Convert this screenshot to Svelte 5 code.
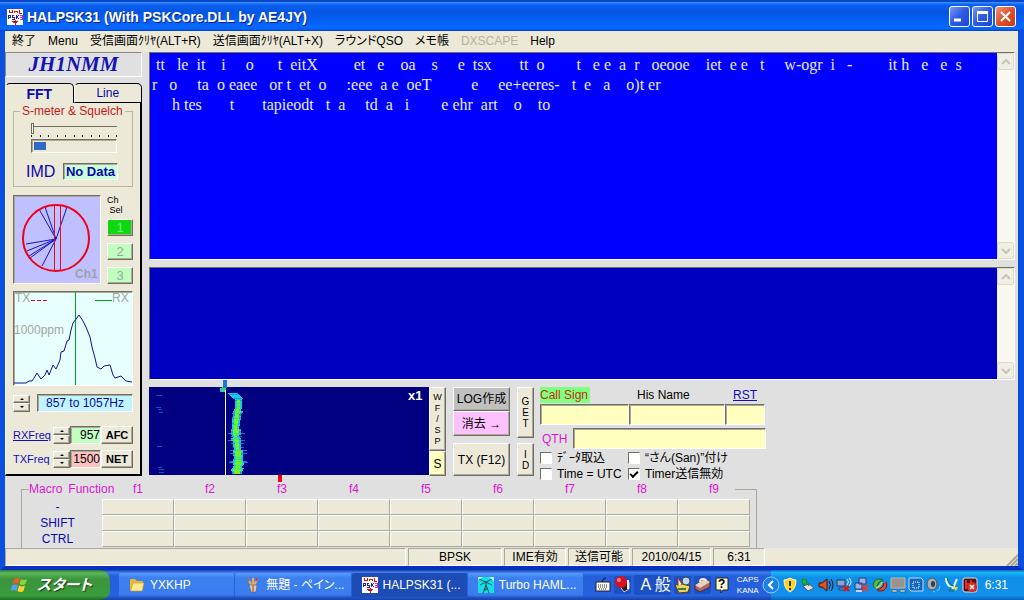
<script lang="ts">
    const menu = [
        { label: "終了" },
        { label: "Menu" },
        { label: "受信画面ｸﾘﾔ(ALT+R)" },
        { label: "送信画面ｸﾘﾔ(ALT+X)" },
        { label: "ラウンドQSO" },
        { label: "メモ帳" },
        { label: "DXSCAPE", disabled: true },
        { label: "Help" },
    ];

    const received = [
        " tt   le  it    i     o      t  eitX         et   e    oa    s     e  tsx       tt  o        t   e e  a  r   oeooe    iet  e e   t     w-ogr  i   -         it h   e   e  s",
        "r   o     ta  o eaee   or t  et  o     :eee  a e  oeT          e     ee+eeres-   t  e   a    o)t er",
        "     h tes       t       tapieodt   t  a     td  a   i        e ehr  art    o    to",
    ].join("\n");

    const functionKeys = ["f1", "f2", "f3", "f4", "f5", "f6", "f7", "f8", "f9"];
    const macroRows = ["-", "SHIFT", "CTRL"];
    const channels = [1, 2, 3];

    const tasks = [
        { icon: "folder", label: "YXKHP" },
        { icon: "paint", label: "無題 - ペイン..." },
        { icon: "psk", label: "HALPSK31 (...", active: true },
        { icon: "turbo", label: "Turbo HAML..." },
    ];

    const trayIcons = ["shield", "eject", "volume", "wireless", "network", "swirl", "monitor", "chip", "speaker", "antenna", "blocked"];

    const level = 15;

    let channel = $state(1);
    let squelch = $state(0);
    let importData = $state(false);
    let addSan = $state(false);
    let useUtc = $state(false);
    let timerOff = $state(true);

    // Waterfall trace: one strip per line, wandering around the carrier
    let seed = 31;
    function rand() {
        seed = (seed * 1103515245 + 12345) % 2147483648;
        return seed / 2147483648;
    }

    type Strip = { x: number; y: number; w: number; fill: string };
    const strips: Strip[] = [];
    let width = 4;
    for (let y = 6; y < 87; y++) {
        const mid = y < 11 ? 84 + (y - 6) : 88 + Math.sin(y / 9) * 1.5;
        if (y % 3 === 0) {
            width = 3 + Math.floor(rand() * 4) + (y > 66 ? 2 : 0);
        }
        if (rand() > 0.85) {
            strips.push({ x: Math.round(mid - width - 2), y, w: width * 2 + 5, fill: "#1976d8" });
        }
        strips.push({ x: Math.round(mid - width / 2 - 2), y, w: width + 4, fill: rand() > 0.7 ? "#1898e8" : "#18d0e0" });
        if (y > 12) {
            strips.push({ x: Math.round(mid - width / 2), y, w: width, fill: rand() > 0.3 ? "#78f020" : "#30e880" });
        }
    }
    for (const y of [8, 20, 22, 25, 59, 80, 82, 85]) {
        strips.push({ x: 7 + Math.floor(rand() * 4), y, w: 4 + Math.floor(rand() * 3), fill: "#1058b8" });
    }
</script>

{#snippet pskIcon()}
    <svg width="16" height="16" viewBox="0 0 16 16" shape-rendering="crispEdges" aria-hidden="true">
        <rect width="16" height="16" fill="#fff" />
        <path d="M2 1v3M5 1v3M2 3h3M7 4V2h3v2M12 1v3h3" stroke="#e01010" fill="none" />
        <path d="M1 10V6h2v2H1M7 6H5v2h2v2H5M9 6v4M12 6l-2 2 2 2" stroke="#2020c0" fill="none" />
        <path d="M13 6h2v4h-2M13 8h2" stroke="#e020d0" fill="none" />
        <path d="M8 11v5M5 12h6M6 13h4" stroke="#d01010" fill="none" />
    </svg>
{/snippet}

{#snippet spinner(name: string)}
    <span class="spinner">
        <button class="raised" aria-label="{name} up"><i class="up"></i></button>
        <button class="raised" aria-label="{name} down"><i class="down"></i></button>
    </span>
{/snippet}

{#snippet scrollbar(name: string)}
    <div class="scrollbar">
        <button aria-label="{name}: scroll up">
            <svg width="10" height="6" viewBox="0 0 10 6"><path d="M1 5l4-4 4 4" fill="none" stroke="#c6c5b8" stroke-width="2" /></svg>
        </button>
        <button aria-label="{name}: scroll down">
            <svg width="10" height="6" viewBox="0 0 10 6"><path d="M1 1l4 4 4-4" fill="none" stroke="#c6c5b8" stroke-width="2" /></svg>
        </button>
    </div>
{/snippet}

{#snippet taskIcon(icon: string)}
    {#if icon === "folder"}
        <svg width="16" height="16" viewBox="0 0 16 16" aria-hidden="true">
            <path d="M1 3q0-1 1-1h4l2 2h5q1 0 1 1v8H2q-1 0-1-1z" fill="#e8b83c" />
            <path d="M4 6h11l-2 8H1.500z" fill="#ffe98a" stroke="#c89a28" stroke-width=".6" />
        </svg>
    {:else if icon === "paint"}
        <svg width="16" height="16" viewBox="0 0 16 16" aria-hidden="true">
            <path d="M3 2l4 7M8 1v8M12 2l-3 7" stroke="#e8b060" stroke-width="2" />
            <path d="M2 1l2 3" stroke="#777" stroke-width="3" />
            <path d="M12 1l-1 3" stroke="#d84020" stroke-width="2" />
            <path d="M4 8h8l-1 7H6z" fill="#b9d3e0" stroke="#567" stroke-width=".7" />
            <path d="M8 8v7" stroke="#e87830" stroke-width="2" />
        </svg>
    {:else if icon === "psk"}
        {@render pskIcon()}
    {:else}
        <svg width="16" height="16" viewBox="0 0 16 16" aria-hidden="true">
            <rect width="16" height="16" fill="#18dce8" />
            <path d="M1 2l13 6M2 8l12-6M8 5v5M8 8l-3 8M8 8l3 8M6 12h4M5 15l5-4" stroke="#14585c" fill="none" />
            <path d="M0 0h5l-5 3zM11 0h5v4z" fill="#b8fcff" />
        </svg>
    {/if}
{/snippet}

{#snippet trayIcon(icon: string)}
    <svg width="16" height="16" viewBox="0 0 16 16" aria-hidden="true">
        {#if icon === "shield"}
            <path d="M8 1q3 2 6 2 0 9-6 12-6-3-6-12 3 0 6-2z" fill="#ffd51c" stroke="#fff6c0" />
            <path d="M8 4v5M8 11v2" stroke="#333" stroke-width="2" />
        {:else if icon === "eject"}
            <path d="M3 9l6-2 5 4-6 3z" fill="#dde3e8" stroke="#56606a" />
            <path d="M2 2l5 1-1 2q4 1 3 4-2-3-5-2L3 8z" fill="#22b82a" stroke="#0c7418" stroke-width=".6" />
        {:else if icon === "volume"}
            <path d="M1 6h3l5-4v12l-5-4H1z" fill="#e85020" stroke="#401008" />
            <path d="M11 4q3 4 0 8M13 2q4 6 0 12" stroke="#401008" fill="none" />
        {:else if icon === "wireless"}
            <path d="M1 3h8v6H1zM3 11h7v2H3z" fill="#8aa4d8" stroke="#24366c" />
            <path d="M11 2q3 3 0 6M13 1q4 4 0 8" stroke="#d8ecff" fill="none" />
            <path d="M8 9l5 5M13 9l-5 5" stroke="#e01818" stroke-width="2" />
        {:else if icon === "network"}
            <path d="M5 1h7v6H5zM1 6h7v6H1z" fill="#9cb4e8" stroke="#283878" />
            <path d="M2 14h6" stroke="#ccd6ea" stroke-width="2" />
            <path d="M8 8l6 6M14 8l-6 6" stroke="#e83838" stroke-width="2" />
        {:else if icon === "swirl"}
            <path d="M2 11a6 6 0 0 1 6-9q3 0 3 2-4-1-6 5" fill="#58b848" stroke="#186828" />
            <path d="M14 5a6 6 0 0 1-6 9q-3 0-3-2 5 1 7-6" fill="#e04838" stroke="#701818" />
            <path d="M4 11q4-1 6-6" stroke="#b8d840" stroke-width="2" fill="none" />
        {:else if icon === "monitor"}
            <path d="M1 1h14v10H1z" fill="#98948c" stroke="#bcb8b0" />
            <path d="M2 13h5v2H2zM10 13h5v2h-5z" fill="#e4e4e0" stroke="#444" stroke-width=".6" />
        {:else if icon === "chip"}
            <path d="M1 1h12l2 2v11H3l-2-2z" fill="#1c64b4" stroke="#b8dcff" />
            <path d="M5 5h6v6H5z" fill="none" stroke="#7cc0f8" stroke-dasharray="1 1" stroke-width="2" />
        {:else if icon === "speaker"}
            <ellipse cx="6" cy="7" rx="5" ry="6" fill="#a8aeb6" stroke="#4c545c" />
            <ellipse cx="7" cy="7" rx="2" ry="3" fill="#343c44" />
            <path d="M11 14q3-1 3-5M9 15q-1 0-2-1" stroke="#80c4ff" fill="none" />
        {:else if icon === "antenna"}
            <path d="M2 1q0 8 7 10l4-9" fill="none" stroke="#e8fff8" stroke-width="2" />
            <path d="M3 1q2 7 7 8M7 10l-2 4h5" fill="none" stroke="#186858" />
            <path d="M9 10h5l-2 4z" fill="#f0e020" />
        {:else}
            <rect x="1" y="1" width="14" height="14" rx="2" fill="#481818" stroke="#f0d8d8" />
            <path d="M4 3v9M4 7h5M9 3v5" stroke="#d83030" stroke-width="2" />
            <circle cx="10" cy="10" r="5" fill="#e02828" />
            <path d="M8 8l4 4M12 8l-4 4" stroke="#fff" stroke-width="1.500" />
        {/if}
    </svg>
{/snippet}

<div class="desktop">
    <main class="window">
        <header class="titlebar">
            {@render pskIcon()}
            <h1>HALPSK31 (With PSKCore.DLL by AE4JY)</h1>
            <button class="caption" aria-label="Minimize">
                <svg width="19" height="19" viewBox="0 0 19 19"><path d="M4 13h7" stroke="#fff" stroke-width="3" /></svg>
            </button>
            <button class="caption" aria-label="Maximize">
                <svg width="19" height="19" viewBox="0 0 19 19"><path d="M4 5.500h11" stroke="#fff" stroke-width="3" /><path d="M4.500 5v9.500h10V5" fill="none" stroke="#fff" /></svg>
            </button>
            <button class="caption close" aria-label="Close">
                <svg width="19" height="19" viewBox="0 0 19 19"><path d="M5 5l9 9M14 5l-9 9" stroke="#fff" stroke-width="2" /></svg>
            </button>
        </header>

        <nav class="menubar">
            {#each menu as item}
                <button disabled={item.disabled}>{item.label}</button>
            {/each}
        </nav>

        <div class="workspace">
            <aside class="side">
                <div class="callsign">JH1NMM</div>
                <div class="tabs">
                    <button class="tab selected">FFT</button>
                    <button class="tab">Line</button>
                </div>

                <div class="panel">
                    <fieldset class="smeter">
                        <legend>S-meter &amp; Squelch</legend>
                        <input type="range" min="0" max="100" bind:value={squelch} aria-label="Squelch" />
                        <div class="ticks">
                            {#each Array(11) as _}<i></i>{/each}
                        </div>
                        <div class="level sunken"><span style="width: {level}%"></span></div>
                        <div class="imd">
                            <span>IMD</span>
                            <output class="sunken">No Data</output>
                        </div>
                    </fieldset>

                    <div class="scope-row">
                        <div class="vector sunken">
                            <svg width="86" height="86" viewBox="0 0 86 86" role="img" aria-label="Phase vectors">
                                <path d="M42 43L25 13M42 43L31 11M42 43L53 11M42 43L12 48M42 43L13 55M42 43L15 60M42 43L16 62M42 43L28 70" stroke="#1414c8" fill="none" />
                                <path d="M40.500 9v65M46.500 9v65" stroke="#e01020" />
                                <circle cx="42" cy="42" r="33" fill="none" stroke="#f00018" stroke-width="2" />
                                <text x="61" y="82">Ch1</text>
                            </svg>
                        </div>
                        <div class="channels">
                            <p>Ch<br />&nbsp;Sel</p>
                            {#each channels as n}
                                <button class="raised" class:on={channel === n} onclick={() => (channel = n)}>{n}</button>
                            {/each}
                        </div>
                    </div>

                    <div class="spectrum sunken">
                        <svg width="118" height="93" viewBox="0 0 118 93" role="img" aria-label="Spectrum">
                            <g shape-rendering="crispEdges" fill="none">
                                <path d="M61.500 0v93" stroke="#00a020" />
                                <path d="M17 8.500h16" stroke="#e00028" stroke-dasharray="4 2" />
                                <path d="M81 8.500h17" stroke="#00a020" />
                            </g>
                            <polyline points="0,91 12,91 15,89 18,89 20,86 23,81 27,87 31,83 33,78 35,83 39,73 42,77 46,68 47,60 50,59 53,49 55,48 57,38 59,31 62,27 65,23 69,29 72,35 76,45 78,55 81,66 83,75 87,77 90,74 96,73 99,83 101,86 107,84 112,89 118,90" fill="none" stroke="#1010a0" />
                            <text x="1" y="10">TX</text>
                            <text x="98" y="10">RX</text>
                            <text x="0" y="42">1000ppm</text>
                        </svg>
                    </div>

                    <div class="row range">
                        {@render spinner("Range")}
                        <output class="sunken">857 to 1057Hz</output>
                    </div>
                    <div class="row">
                        <a href="#rx">RXFreq</a>
                        {@render spinner("RX frequency")}
                        <input class="sunken rx" value="957" aria-label="RX frequency" />
                        <button class="raised">AFC</button>
                    </div>
                    <div class="row">
                        <label for="tx-freq">TXFreq</label>
                        {@render spinner("TX frequency")}
                        <input id="tx-freq" class="sunken tx" value="1500" />
                        <button class="raised">NET</button>
                    </div>
                </div>
            </aside>

            <section class="terminal">
                <div class="pane receive">
                    <textarea readonly wrap="off" aria-label="Received text" value={received}></textarea>
                    {@render scrollbar("Received text")}
                </div>
                <div class="pane transmit">
                    <textarea wrap="off" aria-label="Transmit text"></textarea>
                    {@render scrollbar("Transmit text")}
                </div>

                <div class="controls">
                    <svg class="waterfall" width="280" height="88" viewBox="0 0 280 88" role="img" aria-label="Waterfall" shape-rendering="crispEdges">
                        <rect width="280" height="88" fill="#000080" />
                        {#each strips as s}
                            <rect x={s.x} y={s.y} width={s.w} height="1" fill={s.fill} />
                        {/each}
                        <path d="M71 1h5v4h-5z" fill="#30c8b8" />
                        <path d="M73 0h4v3h-4z" fill="#38d860" />
                        <rect x="76" y="3" width="1" height="85" fill="#f4f4d8" />
                        <rect x="74" y="-7" width="4" height="8" fill="#1878e0" />
                        <rect x="129" y="88" width="4" height="7" fill="#f00010" />
                        <text x="259" y="13">x1</text>
                    </svg>

                    <div class="stack scale">
                        <button class="raised tall">W<br />F<br />/<br />S<br />P</button>
                        <button class="raised yellow">S</button>
                    </div>
                    <div class="stack actions">
                        <button class="raised log">LOG作成</button>
                        <button class="raised pink">消去 →</button>
                        <button class="raised send">TX (F12)</button>
                    </div>
                    <div class="stack getid">
                        <button class="raised get">G<br />E<br />T</button>
                        <button class="raised id">I<br />D</button>
                    </div>

                    <form class="contact">
                        <div class="names">
                            <label class="call" for="call">Call Sign</label>
                            <label class="his" for="his">His Name</label>
                            <a href="#rst">RST</a>
                            <input id="call" class="sunken" />
                            <input id="his" class="sunken" />
                            <input class="sunken" aria-label="RST" />
                        </div>
                        <div class="qth">
                            <label for="qth">QTH</label>
                            <input id="qth" class="sunken" />
                        </div>
                        <div class="options">
                            <label><input type="checkbox" bind:checked={importData} />ﾃﾞｰﾀ取込</label>
                            <label><input type="checkbox" bind:checked={addSan} />“さん(San)”付け</label>
                            <label><input type="checkbox" bind:checked={useUtc} />Time = UTC</label>
                            <label><input type="checkbox" bind:checked={timerOff} />Timer送信無効</label>
                        </div>
                    </form>
                </div>
            </section>
        </div>

        <fieldset class="macros">
            <legend>
                <span>Macro&ensp;Function</span>
                {#each functionKeys as key}<span>{key}</span>{/each}
            </legend>
            <table>
                <tbody>
                    {#each macroRows as row}
                        <tr>
                            <th scope="row">{row}</th>
                            {#each functionKeys as key}
                                <td><button aria-label="{row} {key}"></button></td>
                            {/each}
                        </tr>
                    {/each}
                </tbody>
            </table>
        </fieldset>

        <footer class="statusbar">
            <span class="blank"></span>
            <span class="mode">BPSK</span>
            <span class="state">IME有効</span>
            <span class="state">送信可能</span>
            <span class="date">2010/04/15</span>
            <span class="time">6:31</span>
            <svg class="grip" width="12" height="12" viewBox="0 0 12 12" aria-hidden="true">
                <path d="M1 12L12 1M5 12l7-7M9 12l3-3" stroke="#a8a594" stroke-width="2" />
            </svg>
        </footer>
    </main>

    <div class="taskbar">
        <button class="start">
            <svg width="18" height="18" viewBox="0 0 18 18" aria-hidden="true">
                <path d="M3 3q3-2 6 0L7.500 8q-3-2-6 0z" fill="#f05a28" />
                <path d="M10 3q3 2 6 0l-1.500 5q-3 2-6 0z" fill="#8ad43c" />
                <path d="M1 9.500q3-2 6 0L5.500 15q-3-2-6 0z" fill="#5a9cf8" />
                <path d="M8 9.500q3 2 6 0L12.500 15q-3 2-6 0z" fill="#ffd428" />
            </svg>
            スタート
        </button>
        <div class="tasks">
            {#each tasks as task}
                <button class="task" class:active={task.active}>
                    {@render taskIcon(task.icon)}
                    <span>{task.label}</span>
                </button>
            {/each}
        </div>
        <div class="ime">
            <svg width="16" height="16" viewBox="0 0 16 16" aria-hidden="true">
                <path d="M7 5q0-3 4-4" stroke="#111" fill="none" />
                <rect x="1" y="5" width="14" height="9" fill="#fff" stroke="#222" />
                <path d="M3 8h10M3 10h10M4 12h8" stroke="#222" stroke-dasharray="1 1" />
            </svg>
            <svg class="well" width="17" height="18" viewBox="0 0 17 18" aria-hidden="true">
                <path d="M5 9l5 7 5-3V6" fill="#222" stroke="#ccc" />
                <circle cx="7" cy="6" r="6" fill="#d81020" />
                <circle cx="5" cy="4" r="2" fill="#ff8890" />
                <path d="M14 4v9" stroke="#f4f4f4" stroke-width="2" />
            </svg>
            <span class="well mode-text">A 般</span>
            <svg class="well" width="17" height="18" viewBox="0 0 17 18" aria-hidden="true">
                <path d="M1 9l8-1 7 2-2 6-9 1z" fill="#f4d458" stroke="#5c3c10" />
                <path d="M4 10V2l4 6" fill="#f8f0c0" stroke="#b83020" />
                <circle cx="12" cy="5" r="4" fill="#b8d8f0" stroke="#444" />
                <path d="M4 13h8" stroke="#308040" stroke-width="2" />
            </svg>
            <svg class="well" width="17" height="18" viewBox="0 0 17 18" aria-hidden="true">
                <path d="M1 9l10-6 5 3v5L6 16l-5-3z" fill="#a86868" stroke="#482828" />
                <path d="M1 9l10-6 5 3-10 6z" fill="#e8d0c0" />
                <path d="M6 6q0-3 3-3t3 2" stroke="#f8e8e0" stroke-width="2" fill="none" />
            </svg>
            <svg width="16" height="18" viewBox="0 0 16 18" aria-hidden="true">
                <path d="M2 2h12v12H9l-2 3v-3H2z" fill="#fffbd8" stroke="#222" />
                <text x="4" y="12">?</text>
            </svg>
            <span class="locks">CAPS<br />KANA</span>
        </div>
        <div class="tray">
            <button class="chevron" aria-label="Show hidden icons">
                <svg width="18" height="18" viewBox="0 0 18 18"><circle cx="9" cy="9" r="8" fill="#1c80e8" stroke="#8cc8f8" /><path d="M11 5L7 9l4 4" fill="none" stroke="#fff" stroke-width="2" /></svg>
            </button>
            {#each trayIcons as icon}
                {@render trayIcon(icon)}
            {/each}
            <time>6:31</time>
        </div>
    </div>
</div>

<style>
    :global(body) {
        margin: 0;
        background: #0a1c5c;
    }

    .desktop {
        --face: #ece9d8;
        --form: #e0e0e0;
        --navy: #0a0aa8;
        --magenta: #d818d0;
        font-family: "Liberation Sans", "Noto Sans CJK JP", sans-serif;
        font-feature-settings: "palt";
        font-size: 12px;
        line-height: 16px;
        color: #000;
        white-space: nowrap;
        padding-top: 2px;
        background: #0848c8;
    }

    .desktop * {
        box-sizing: border-box;
    }

    button,
    input,
    textarea {
        margin: 0;
        padding: 0;
        border: 0;
        border-radius: 0;
        font: inherit;
        font-feature-settings: inherit;
        color: inherit;
    }

    fieldset {
        min-width: 0;
        margin: 0;
    }

    svg {
        display: block;
        flex: none;
    }

    p,
    h1 {
        margin: 0;
    }

    a {
        color: #1010b8;
    }

    .raised {
        background: var(--face);
        border: 1px solid;
        border-color: #fff #716f64 #716f64 #fff;
        box-shadow: inset -1px -1px #aca899;
    }

    .sunken {
        border: 1px solid;
        border-color: #716f64 #fff #fff #716f64;
        box-shadow: inset 1px 1px #aca899;
    }

    /* Window frame */
    .window {
        border: solid #0a4fe0;
        border-width: 0 6px 4px 5px;
        border-bottom-color: #0831c0;
        background: var(--form);
    }

    .titlebar {
        display: flex;
        align-items: center;
        gap: 2px;
        height: 29px;
        margin: 0 -6px 0 -5px;
        padding: 0 8px 0 7px;
        background: linear-gradient(#3c94fc 0, #0a5ff0 10%, #0356e4 35%, #0562fa 70%, #0668ff 92%, #0340c0 100%);
    }

    h1 {
        flex: 1;
        padding-left: 2px;
        font-size: 14px;
        font-weight: bold;
        line-height: 20px;
        color: #fff;
        text-shadow: 1px 1px #0a2080;
    }

    .caption {
        width: 21px;
        height: 21px;
        border: 1px solid #fff;
        border-radius: 3px;
        background: linear-gradient(135deg, #7a9cf4, #2c58e4 50%, #1c48d0);
    }

    .close {
        background: linear-gradient(135deg, #f09878, #e0502c 50%, #c83810);
    }

    .menubar {
        display: flex;
        height: 21px;
        padding: 0 0 2px 1px;
        background: var(--face);
    }

    .menubar button {
        padding: 0 6px;
        background: none;
    }

    .menubar button:disabled {
        color: #b4b1a2;
    }

    .workspace {
        display: flex;
        gap: 7px;
        padding-right: 3px;
    }

    /* Left panel */
    .side {
        flex: none;
        width: 137px;
    }

    .callsign {
        height: 25px;
        border: 1px solid;
        border-color: #888 #fff #fff #888;
        font: italic bold 21px/23px "Liberation Serif", serif;
        text-align: center;
        color: #1414b4;
    }

    .tabs {
        display: flex;
        align-items: flex-start;
        padding-top: 6px;
        height: 26px;
    }

    .tab {
        flex: 1;
        height: 20px;
        border: 1px solid #000;
        border-left-color: #fff;
        border-radius: 5px 5px 0 0;
        background: var(--face);
        color: var(--navy);
    }

    .tab.selected {
        border-bottom: 0;
        border-right-color: #000;
        font-weight: bold;
        font-size: 14px;
    }

    .panel {
        display: flex;
        flex-direction: column;
        padding: 0 7px;
        border: solid #000;
        border-width: 0 2px 2px 1px;
        border-left-color: #fff;
        background: var(--face);
    }

    .smeter {
        display: flex;
        flex-direction: column;
        height: 84px;
        padding: 4px 15px 0 17px;
        border: 1px solid #b8b5a6;
    }

    .smeter legend {
        margin-left: -11px;
        padding: 0 2px;
        color: #c81818;
    }

    input[type="range"] {
        appearance: none;
        width: 100%;
        height: 11px;
        background: linear-gradient(#716f64, #716f64) 0 3px / 100% 1px no-repeat;
    }

    input[type="range"]::-webkit-slider-thumb {
        appearance: none;
        width: 3px;
        height: 11px;
        border: 1px solid #716f64;
        background: #fff;
    }

    .ticks {
        display: flex;
        justify-content: space-between;
        margin: 1px 0 2px;
    }

    .ticks i {
        width: 1px;
        height: 2px;
        background: #222;
    }

    .level {
        flex: none;
        height: 14px;
        padding: 2px;
    }

    .level span {
        display: block;
        height: 100%;
        background: #316ac5;
    }

    .imd {
        display: flex;
        justify-content: space-between;
        align-items: center;
        margin: 10px -1px 0 -5px;
        color: var(--navy);
        font-size: 16px;
    }

    .imd output {
        padding: 0 2px;
        background: #c8ffd8;
        font: bold 13px/15px "Liberation Sans", sans-serif;
    }

    .scope-row {
        display: flex;
        justify-content: space-between;
        padding-top: 8px;
    }

    .vector {
        background: #c0c0ff;
    }

    .vector text {
        font-size: 12px;
        font-weight: bold;
        fill: #a0a0a8;
    }

    .channels {
        display: flex;
        flex-direction: column;
        gap: 7px;
        width: 26px;
    }

    .channels p {
        height: 17px;
        font-size: 9px;
        line-height: 10px;
    }

    .channels button {
        height: 17px;
        background: #c0ffc0;
        font-size: 13px;
        line-height: 14px;
        color: #98a898;
    }

    .channels .on {
        background: #10d810;
        color: #70f070;
    }

    .spectrum {
        margin-top: 7px;
        background: #e8ffff;
    }

    .spectrum svg {
        width: 100%;
    }

    .spectrum text {
        font-size: 12px;
        fill: #a0a8a0;
    }

    .row {
        display: flex;
        align-items: center;
        height: 18px;
        margin-bottom: 6px;
    }

    .row.range {
        gap: 7px;
        margin: 8px 0 14px;
    }

    .row output {
        flex: 1;
        height: 18px;
        background: #c0f4ff;
        color: var(--navy);
        text-align: center;
    }

    .row a,
    .row label {
        flex: 1;
        color: #1010b8;
        font-size: 11px;
    }

    .row input {
        width: 31px;
        height: 18px;
        text-align: right;
    }

    .row > button {
        width: 32px;
        height: 18px;
        font-size: 11px;
        font-weight: bold;
        line-height: 14px;
    }

    .rx {
        background: #c0ffc0;
    }

    .tx {
        background: #ffc0c0;
    }

    .spinner {
        display: grid;
        width: 17px;
        height: 17px;
    }

    .spinner button {
        display: grid;
        place-items: center;
    }

    .spinner i {
        border: 2px solid transparent;
    }

    .spinner .up {
        border-top: 0;
        border-bottom-color: #000;
    }

    .spinner .down {
        border-bottom: 0;
        border-top-color: #000;
    }

    /* Text panes */
    .terminal {
        flex: 1;
        min-width: 0;
        display: flex;
        flex-direction: column;
        gap: 7px;
    }

    .pane {
        display: flex;
        border: 1px solid;
        border-color: #716f64 #fff #fff #716f64;
        background: #0000ff;
    }

    .receive {
        height: 208px;
    }

    .transmit {
        height: 113px;
        background: #0000c0;
    }

    textarea {
        flex: 1;
        min-width: 0;
        padding: 2px;
        resize: none;
        overflow: hidden;
        background: none;
        color: #e8ecff;
        font: 16px/20px "Liberation Serif", serif;
        white-space: pre;
        outline: none;
    }

    .scrollbar {
        display: flex;
        flex-direction: column;
        justify-content: space-between;
        width: 17px;
        background: #f8f7f0;
    }

    .scrollbar button {
        display: grid;
        place-items: center;
        height: 17px;
        border: 1px solid #dcd9c8;
        border-radius: 2px;
        background: #f0efe4;
    }

    /* Waterfall and contact form */
    .controls {
        display: flex;
        align-items: flex-start;
        height: 96px;
    }

    .waterfall {
        overflow: visible;
    }

    .waterfall text {
        font-size: 13px;
        font-weight: bold;
        fill: #fff;
    }

    .stack {
        display: flex;
        flex-direction: column;
        flex: none;
        height: 89px;
    }

    .scale {
        width: 17px;
    }

    .scale .tall {
        flex: 1;
        font-size: 9px;
        line-height: 11px;
    }

    .scale .yellow {
        height: 25px;
        background: #ffffc0;
    }

    .actions {
        width: 57px;
        margin: 0 7px;
    }

    .actions .log {
        height: 24px;
        background: #c0c0c0;
    }

    .actions .pink {
        height: 25px;
        background: #ffc0ff;
    }

    .actions .send {
        height: 33px;
        margin-top: auto;
    }

    .getid {
        width: 17px;
        justify-content: space-between;
        font-size: 10px;
        line-height: 11px;
    }

    .get {
        height: 51px;
    }

    .id {
        height: 33px;
    }

    .contact {
        width: 226px;
        margin-left: 6px;
    }

    .names {
        display: grid;
        grid-template-columns: 89px 96px 40px;
        align-items: end;
        row-gap: 1px;
    }

    .call {
        justify-self: start;
        padding-right: 2px;
        background: #80ff80;
        color: #c03010;
    }

    .his {
        padding-left: 8px;
    }

    .names a {
        padding-left: 8px;
    }

    .contact .sunken {
        width: 100%;
        height: 21px;
        padding: 0 3px;
        background: #ffffc0;
    }

    .qth {
        display: grid;
        grid-template-columns: 33px 1fr;
        align-items: center;
        margin: 3px 0 1px;
        color: var(--magenta);
    }

    .qth label {
        padding-left: 2px;
    }

    .options {
        display: grid;
        grid-template-columns: 88px 1fr;
    }

    .options label {
        display: flex;
        align-items: center;
        gap: 5px;
        height: 16px;
    }

    input[type="checkbox"] {
        appearance: none;
        display: grid;
        place-items: center;
        width: 12px;
        height: 12px;
        border: 1px solid;
        border-color: #716f64 #fff #fff #716f64;
        background: #fff;
    }

    input[type="checkbox"]:checked::before {
        content: "";
        width: 6px;
        height: 3px;
        margin-bottom: 2px;
        border: solid #000;
        border-width: 0 0 2px 2px;
        transform: rotate(-45deg);
    }

    /* Macro table */
    .macros {
        width: 736px;
        margin-left: 16px;
        padding: 0 0 1px 7px;
        border: 1px solid #aca899;
        border-bottom: 0;
    }

    .macros legend {
        display: grid;
        grid-template-columns: 104px repeat(8, 72px) 26px;
        padding: 0;
        height: 13px;
        line-height: 13px;
        color: var(--magenta);
    }

    table {
        border-collapse: collapse;
        table-layout: fixed;
        width: 721px;
        margin-top: 3px;
    }

    th {
        width: 73px;
        padding: 0 16px 0 0;
        height: 16px;
        font-weight: normal;
        line-height: 16px;
        color: var(--navy);
    }

    td {
        padding: 0;
    }

    td button {
        display: block;
        width: 100%;
        height: 16px;
        border: 1px solid;
        border-color: #fff #aca899 #aca899 #fff;
        background: var(--face);
    }

    .statusbar {
        display: flex;
        gap: 2px;
        height: 18px;
        background: var(--face);
    }

    .statusbar span {
        flex: none;
        border: 1px solid;
        border-color: #aca899 #fff #fff #aca899;
        text-align: center;
    }

    .statusbar .blank {
        width: 401px;
    }

    .statusbar .mode {
        width: 94px;
    }

    .statusbar .state {
        width: 62px;
    }

    .statusbar .date {
        width: 79px;
    }

    .statusbar .time {
        width: 52px;
    }

    .grip {
        align-self: flex-end;
        margin-left: auto;
    }

    /* Taskbar */
    .taskbar {
        display: flex;
        height: 30px;
        background: linear-gradient(#1941a5 0, #3a80f4 8%, #245edb 20%, #2663e0 85%, #1941a5 100%);
        color: #fff;
    }

    .start {
        display: flex;
        flex: none;
        align-items: center;
        gap: 8px;
        width: 110px;
        padding-left: 11px;
        border-radius: 0 10px 10px 0;
        background: linear-gradient(#2c7c2c 0, #5cb85c 10%, #3c943c 30%, #3a9c3a 85%, #226c22 100%);
        font-size: 15px;
        font-style: italic;
        font-weight: bold;
        text-shadow: 1px 1px 1px #143c14;
    }

    .tasks {
        display: flex;
        flex: 1;
        align-items: center;
        gap: 1px;
        max-width: 473px;
        padding-left: 9px;
    }

    .task {
        flex: 1;
        display: flex;
        align-items: center;
        gap: 5px;
        height: 24px;
        min-width: 0;
        padding-left: 10px;
        border-radius: 2px;
        background: linear-gradient(#5c9cfc 0, #3c80f0 20%, #3a7cee 90%, #2c60d0 100%);
        text-align: left;
    }

    .task.active {
        background: #1c4cb4;
    }

    .ime {
        display: flex;
        flex: none;
        align-items: center;
        gap: 3px;
        margin-left: auto;
        padding-right: 12px;
    }

    .well {
        border-radius: 2px;
        background: #1c50c4;
    }

    .mode-text {
        width: 37px;
        font-size: 16px;
        line-height: 20px;
        text-align: right;
    }

    .ime text {
        font-size: 12px;
        font-weight: bold;
        fill: #000;
    }

    .locks {
        margin-left: 4px;
        font-size: 8px;
        line-height: 11px;
    }

    .tray {
        display: flex;
        flex: none;
        align-items: center;
        gap: 2px;
        padding-right: 16px;
        background: linear-gradient(#0c5cb8 0, #18b8f8 8%, #0f8fe8 25%, #1290ec 85%, #0a60b8 100%);
    }

    .chevron {
        margin-left: -9px;
        background: none;
    }

    time {
        padding-left: 5px;
    }
</style>
